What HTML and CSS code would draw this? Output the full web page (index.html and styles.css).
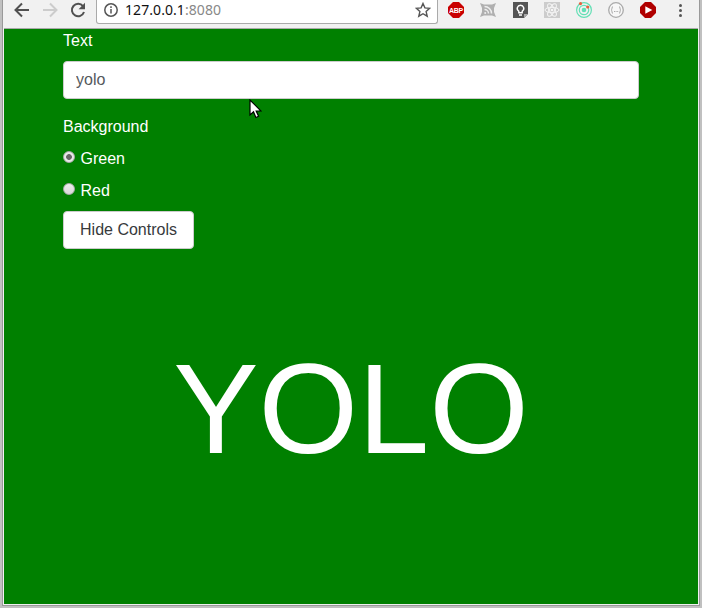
FILE: index.html
```html
<!DOCTYPE html>
<html lang="en">
<head>
<meta charset="utf-8">
<title>Yolo</title>
<link rel="stylesheet" href="styles.css">
</head>
<body>
<div class="window">
  <header class="toolbar">
    <svg class="nav" viewBox="0 0 16 16"><path d="M15 8H2M8 1.500 1.500 8 8 14.500"/></svg>
    <svg class="nav forward" viewBox="0 0 16 16"><path d="M1 8h13M8 1.500 14.500 8 8 14.500"/></svg>
    <svg class="nav reload" viewBox="0 0 16 16"><path d="M13 4.200A6.200 6.200 0 1 0 14 10"/><path class="fill" d="M15 .8v6.400H8.600z"/></svg>
    <div class="address">
      <svg class="info" viewBox="0 0 14 14"><circle cx="7" cy="7" r="6.200"/><path d="M7 6v4.500M7 3.300v1.600"/></svg>
      <span class="url">127.0.0.1<span class="port">:8080</span></span>
      <svg class="star" viewBox="0 0 16 16"><path d="m8 1.500 1.900 4.400 4.800.4-3.600 3.200 1.100 4.700L8 11.700l-4.200 2.500 1.100-4.700-3.600-3.200 4.800-.4z"/></svg>
    </div>
    <div class="extensions">
      <svg viewBox="0 0 16 16"><path fill="#c90000" d="M5 0h6l5 5v6l-5 5H5l-5-5V5z"/><text class="abp" x="8" y="10.800">ABP</text></svg>
      <svg viewBox="0 0 16 16"><path fill="#b0b0b0" d="m0 1 4 1.500h8L16 1l-2 5v4l2 5-4-1.500H4L0 15l2-5V6z"/><g fill="none" stroke="#eee" stroke-width="1.500"><path d="M4.500 4.500a7 7 0 0 1 7 7M4.500 7.500a4 4 0 0 1 4 4"/></g><circle cx="5.200" cy="11" r="1" fill="#eee"/></svg>
      <svg viewBox="0 0 16 16"><path fill="#555" d="M1 0h15v12l-4 4H1z"/><path fill="#aaa" d="M16 12h-4v4z"/><path fill="none" stroke="#fff" stroke-width="1.400" d="M6.800 9.200C3.800 7 5.500 3.300 8.500 3.300s4.700 3.700 1.700 5.900v1.600H6.800zM7 13h3"/></svg>
      <svg viewBox="0 0 16 16"><path fill="#ccc" d="M0 0h16v16H0z"/><g fill="none" stroke="#f5f5f5"><ellipse cx="8" cy="8" rx="7" ry="2.700"/><ellipse cx="8" cy="8" rx="7" ry="2.700" transform="rotate(60 8 8)"/><ellipse cx="8" cy="8" rx="7" ry="2.700" transform="rotate(120 8 8)"/></g><circle cx="8" cy="8" r="1.300" fill="#f5f5f5"/></svg>
      <svg viewBox="0 0 16 16"><g fill="none" stroke="#63dfb5" stroke-width="1.200"><circle cx="8" cy="8" r="7.400"/><circle cx="8" cy="8" r="4.700"/></g><circle cx="8" cy="8" r="2.300" fill="#63dfb5"/><circle cx="4.500" cy="1.600" r="1.600" fill="#e8603c"/><circle cx="11.700" cy="5" r="1.600" fill="#e8603c"/></svg>
      <svg viewBox="0 0 16 16"><circle cx="8" cy="8" r="7.300" fill="#f7f7f7" stroke="#aaa" stroke-width="1.300"/><path fill="none" stroke="#aaa" d="M5 4.500c-1.500 0-.5 3-1.800 3.500 1.300.5.300 3.500 1.800 3.500M11 4.500c1.500 0 .5 3 1.800 3.500-1.300.5-.3 3.500-1.800 3.500"/><path fill="none" stroke="#aaa" d="M6 9.500h1M7.600 9.500h1M9.200 9.500h1"/></svg>
      <svg viewBox="0 0 16 16"><path fill="#b00000" d="M5 0h6l5 5v6l-5 5H5l-5-5V5z"/><path fill="#fff" d="m5.300 4.200 7 3.800-7 3.800z"/></svg>
      <svg viewBox="0 0 16 16"><g fill="#555"><circle cx="8.500" cy="3.500" r="1.500"/><circle cx="8.500" cy="8.500" r="1.500"/><circle cx="8.500" cy="13.500" r="1.500"/></g></svg>
    </div>
  </header>
  <main class="page">
    <form class="controls">
      <label class="caption" for="text">Text</label>
      <input class="field" id="text" type="text" value="yolo">
      <div class="caption background">Background</div>
      <div class="choice"><span class="radio selected"></span>Green</div>
      <div class="choice"><span class="radio"></span>Red</div>
      <button class="button" type="button">Hide Controls</button>
    </form>
    <h1 class="message">YOLO</h1>
  </main>
</div>
<svg class="cursor" viewBox="0 0 13 20"><path d="M1 1v15l3.500-3.200 2.400 5.700 2.700-1.200-2.400-5.300H12z"/></svg>
</body>
</html>
```
FILE: styles.css
```css
* { box-sizing: border-box; }
body { margin: 0; background: #c0c0c0; font: 16px/24px "Liberation Sans", Arial, sans-serif; overflow: hidden; }
.window { height: 606px; margin: 0 2px; border: solid #999; border-width: 0 1px 1px; background: #f1f1f1; padding: 0 1px 1px; display: flex; flex-direction: column; }
.toolbar { height: 29px; flex: none; display: flex; align-items: flex-start; background: #f1f1f1; border-bottom: 1px solid #aaa; padding-left: 10px; }
.nav { width: 16px; height: 16px; margin: 2px 12px 0 0; fill: none; stroke: #505050; stroke-width: 2; }
.forward { stroke: #ccc; }
.reload { margin-right: 10px; }
.fill { fill: #505050; stroke: none; }
.address { width: 342px; height: 24px; display: flex; align-items: flex-start; background: #fff; border: 1px solid #aaa; border-top: 0; border-radius: 0 0 3px 3px; padding: 0 6px 0 7px; }
.info { width: 14px; height: 14px; margin: 3px 7px 0 0; fill: none; stroke: #555; stroke-width: 1.500; }
.url { flex: 1; font: 14px/20px "Noto Sans", sans-serif; letter-spacing: .07px; color: #111; }
.port { color: #888; }
.star { width: 16px; height: 16px; margin-top: 2px; fill: none; stroke: #555; stroke-width: 1.400; }
.extensions { display: flex; gap: 16px; margin: 2px 0 0 10px; }
.extensions svg { width: 16px; height: 16px; overflow: visible; }
.abp { font: bold 7px "Liberation Sans", sans-serif; letter-spacing: -.2px; fill: #fff; text-anchor: middle; }
.page { flex: 1; background: #008000; color: #fff; }
.controls { width: 576px; margin-left: 59px; }
.caption { display: block; }
.field { display: block; width: 576px; height: 38px; margin: 8px 0 16px; padding: 6px 12px; border: 1px solid #ccc; border-radius: 4px; background: #fff; color: #55595c; font: inherit; }
.background { margin-bottom: 8px; }
.choice { height: 24px; display: flex; margin-bottom: 8px; }
.radio { width: 12px; height: 12px; margin: 4px 5.500px 0 0; border: 1px solid #aaa; border-radius: 50%; background: linear-gradient(#eee, #d8d8d8); }
.selected { background: radial-gradient(circle, #666 0 2.500px, #e8e8e8 3.200px); }
.button { display: block; width: 131px; height: 38px; padding: 0; border: 1px solid #ccc; border-radius: 4px; background: #fff; color: #373a3c; font: inherit; }
.message { margin: 89px 0 0; font-size: 128px; line-height: 141px; font-weight: 400; text-align: center; }
.cursor { position: absolute; left: 249px; top: 99px; width: 13px; height: 20px; fill: #fff; stroke: #000; stroke-width: 1.200; }
```
